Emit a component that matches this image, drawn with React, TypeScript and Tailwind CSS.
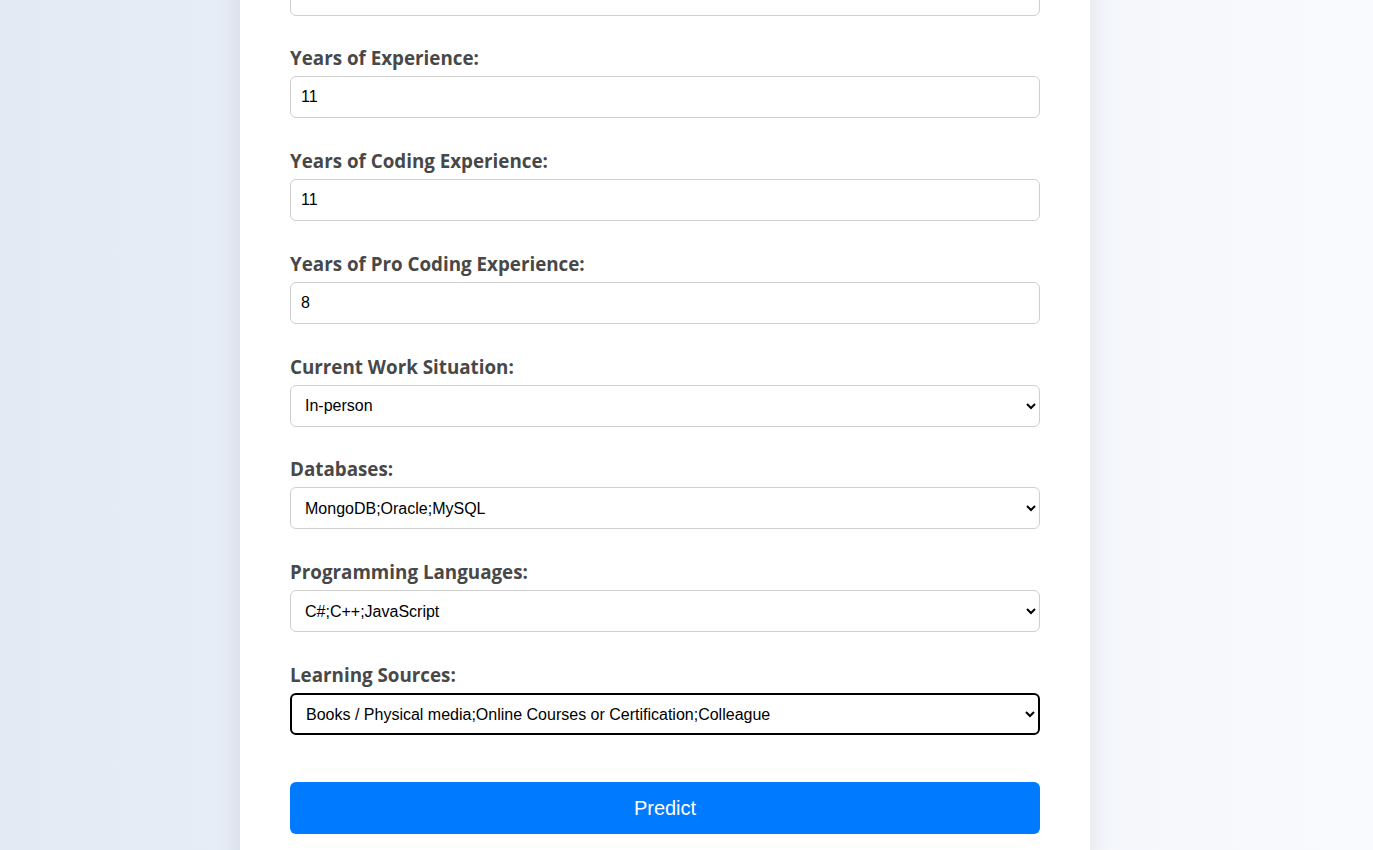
import { useState } from 'react';

const labelCls = "block text-[18.8px] leading-[22px] pt-[2px] font-bold text-[#484848] mb-[7px] [font-family:'Open_Sans',Lato,sans-serif]";
const inputCls = "block w-full h-[42px] px-[10px] border border-[#cfcfcf] rounded-[6px] bg-white text-[16px] text-black [font-family:'Liberation_Sans',Arial,sans-serif] outline-none";
const selectCls = "block w-full h-[42px] px-[10px] border border-[#cfcfcf] rounded-[6px] bg-white text-[16px] text-black [font-family:'Liberation_Sans',Arial,sans-serif] outline-none";

export default function App() {
  const [form, setForm] = useState({
    country: 'United States of America',
    yearsExp: '11',
    yearsCode: '11',
    yearsCodePro: '8',
    work: 'In-person',
    db: 'MongoDB;Oracle;MySQL',
    lang: 'C#;C++;JavaScript',
    learn: 'Books / Physical media;Online Courses or Certification;Colleague',
  });

  return (
    <div className="h-[850px] overflow-hidden bg-gradient-to-r from-[#e3eaf4] to-[#f9fafd]">
      <div className="ml-[240px] w-[850px] min-h-[950px] bg-white shadow-[0_0_24px_rgba(0,0,0,0.09)] px-[50px]">
        <form className="-mt-[26.5px]" onSubmit={e => e.preventDefault()}>
          <div className="mb-[29.8px]">
            <input type="text" value={form.country} onChange={e => setForm({ ...form, country: e.target.value })} className={inputCls} />
          </div>
          <div className="mb-[29.8px]">
            <label className={labelCls}>Years of Experience:</label>
            <input type="number" value={form.yearsExp} onChange={e => setForm({ ...form, yearsExp: e.target.value })} className={inputCls} />
          </div>
          <div className="mb-[29.8px]">
            <label className={labelCls}>Years of Coding Experience:</label>
            <input type="number" value={form.yearsCode} onChange={e => setForm({ ...form, yearsCode: e.target.value })} className={inputCls} />
          </div>
          <div className="mb-[29.8px]">
            <label className={labelCls}>Years of Pro Coding Experience:</label>
            <input type="number" value={form.yearsCodePro} onChange={e => setForm({ ...form, yearsCodePro: e.target.value })} className={inputCls} />
          </div>
          <div className="mb-[29.8px]">
            <label className={labelCls}>Current Work Situation:</label>
            <select value={form.work} onChange={e => setForm({ ...form, work: e.target.value })} className={selectCls}>
              <option>In-person</option>
              <option>Remote</option>
              <option>Hybrid (some remote, some in-person)</option>
            </select>
          </div>
          <div className="mb-[29.8px]">
            <label className={labelCls}>Databases:</label>
            <select value={form.db} onChange={e => setForm({ ...form, db: e.target.value })} className={selectCls}>
              <option>MongoDB;Oracle;MySQL</option>
              <option>PostgreSQL</option>
            </select>
          </div>
          <div className="mb-[29.8px]">
            <label className={labelCls}>Programming Languages:</label>
            <select value={form.lang} onChange={e => setForm({ ...form, lang: e.target.value })} className={selectCls}>
              <option>C#;C++;JavaScript</option>
              <option>Python</option>
            </select>
          </div>
          <div className="mb-[29.8px]">
            <label className={labelCls}>Learning Sources:</label>
            <select value={form.learn} onChange={e => setForm({ ...form, learn: e.target.value })}
              className={selectCls + " border-2 border-black"}>
              <option>Books / Physical media;Online Courses or Certification;Colleague</option>
              <option>Other online resources</option>
            </select>
          </div>
          <button type="submit"
            className="block w-full h-[52px] mt-[47px] rounded-[6px] bg-[#007bff] text-white text-[20px] [font-family:'Liberation_Sans',Arial,sans-serif]">
            Predict
          </button>
        </form>
      </div>
    </div>
  );
}
